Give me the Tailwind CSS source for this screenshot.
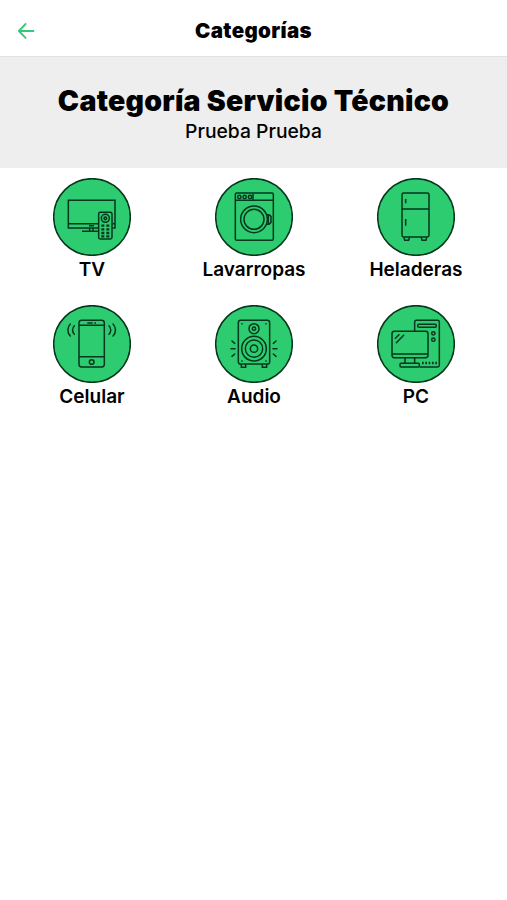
<!DOCTYPE html>
<html lang="es">
<head>
    <meta charset="UTF-8">
    <meta name="viewport" content="width=device-width, initial-scale=1.0">
    <title>Categorías</title>
    <script src="https://cdn.jsdelivr.net/npm/@tailwindcss/browser@4"></script>
</head>
<body class="bg-white text-black font-['Inter',sans-serif]">
    <header class="grid grid-cols-[60px_1fr_60px] items-center h-[57px] pt-[5px] border-b border-[#e2e2e2]">
        <a href="#" aria-label="Volver" class="pl-[17px]">
            <svg class="w-[18px] h-[18px]" viewBox="0 0 18 18" fill="none" stroke="#36c878" stroke-width="1.8" stroke-linecap="round" stroke-linejoin="round">
                <path d="M16.5 9H1.8M8.6 2L1.8 9l6.8 6.8" />
            </svg>
        </a>
        <h1 class="text-center text-[20.5px] leading-6 font-black tracking-[0.35px]">Categorías</h1>
    </header>

    <section class="h-[111px] pt-[26px] bg-[#eeeeee] text-center whitespace-nowrap">
        <h2 class="text-[28.5px] leading-[36px] font-black tracking-[0.25px]">Categoría Servicio Técnico</h2>
        <p class="text-[19.3px] leading-[25px] font-medium">Prueba Prueba</p>
    </section>

    <main class="grid grid-cols-[162px_162px_162px] gap-y-[22px] px-[11px] pt-[10px] text-[19px] leading-[27px] font-semibold">
        <a href="#" class="flex flex-col items-center">
            <svg class="w-[78px] h-[78px]" viewBox="18 15 234 234" fill="none" stroke="#06361c" stroke-width="4.5">
                <circle cx="135" cy="132" r="115" fill="#2ecc71" />
                <path d="M154 165H64V82h140v83h-7M64 152h90M197 152h7M105 175h49M126 158h15M128 165v10M138 165v10" />
                <rect x="155" y="118" width="40" height="80" rx="5" fill="#2ecc71" />
                <circle cx="175" cy="136" r="12" />
                <circle cx="175" cy="136" r="4" />
                <path d="M163 158h9M178 158h9M163 169h9M178 169h9M163 180h9M178 180h9M163 190h9M178 190h9" stroke-width="7" />
            </svg>
            <span>TV</span>
        </a>
        <a href="#" class="flex flex-col items-center">
            <svg class="w-[78px] h-[78px]" viewBox="18 15 234 234" fill="none" stroke="#06361c" stroke-width="4.5">
                <circle cx="135" cy="132" r="115" fill="#2ecc71" />
                <rect x="79" y="60" width="114" height="142" rx="4" />
                <path d="M79 82h114M132 62v20" />
                <circle cx="91" cy="72" r="5" />
                <circle cx="107" cy="72" r="5" />
                <circle cx="123" cy="72" r="5" />
                <circle cx="135" cy="139" r="40" />
                <circle cx="135" cy="139" r="30" />
                <path d="M172 125h8l6 5v18l-6 6h-8M178 127v25" />
            </svg>
            <span>Lavarropas</span>
        </a>
        <a href="#" class="flex flex-col items-center">
            <svg class="w-[78px] h-[78px]" viewBox="18 15 234 234" fill="none" stroke="#06361c" stroke-width="4.5">
                <circle cx="135" cy="132" r="115" fill="#2ecc71" />
                <rect x="93" y="60" width="81" height="132" rx="5" />
                <path d="M93 108h81M104 78v13M104 138v20M99 193l2 9h12l2-9M151 193l2 9h12l2-9" />
            </svg>
            <span>Heladeras</span>
        </a>
        <a href="#" class="flex flex-col items-center">
            <svg class="w-[78px] h-[78px]" viewBox="18 15 234 234" fill="none" stroke="#06361c" stroke-width="4.5">
                <circle cx="135" cy="132" r="115" fill="#2ecc71" />
                <rect x="96" y="61" width="76" height="140" rx="8" />
                <path d="M96 76h76M96 170h76M121 69h16M142 69h5" />
                <circle cx="134" cy="186" r="7" />
                <path d="M82 77c-7 7-7 19 0 26M70 72c-10 10-10 26 0 36M186 77c7 7 7 19 0 26M198 72c10 10 10 26 0 36" stroke-linecap="round" />
            </svg>
            <span>Celular</span>
        </a>
        <a href="#" class="flex flex-col items-center">
            <svg class="w-[78px] h-[78px]" viewBox="18 15 234 234" fill="none" stroke="#06361c" stroke-width="4.5">
                <circle cx="135" cy="132" r="115" fill="#2ecc71" />
                <rect x="88" y="61" width="94" height="131" rx="7" />
                <circle cx="135" cy="86" r="15" />
                <circle cx="135" cy="86" r="5" />
                <circle cx="135" cy="146" r="37" />
                <circle cx="135" cy="146" r="26" />
                <circle cx="135" cy="146" r="11" />
                <path d="M97 193v9h13v-9M160 193v9h13v-9M97 71h4M169 71h4M97 183h4M169 183h4" />
                <path d="M69 123l8 7M66 146h12M69 169l8-7M201 123l-8 7M204 146h-12M201 169l-8-7" stroke-linecap="round" />
            </svg>
            <span>Audio</span>
        </a>
        <a href="#" class="flex flex-col items-center">
            <svg class="w-[78px] h-[78px]" viewBox="18 15 234 234" fill="none" stroke="#06361c" stroke-width="4.5">
                <circle cx="135" cy="132" r="115" fill="#2ecc71" />
                <path d="M131 94V66q0-5 5-5h64q5 0 5 5v130q0 5-5 5h-54" />
                <rect x="140" y="73" width="56" height="9" rx="4" />
                <circle cx="187" cy="100" r="5" />
                <circle cx="187" cy="119" r="5" />
                <rect x="63" y="94" width="108" height="79" rx="7" />
                <path d="M63 162h108M102 174v16M131 174v16" />
                <rect x="87" y="190" width="58" height="11" rx="3" />
                <path d="M73 115l11-11M76 128l22-22" stroke-linecap="round" />
                <path d="M153 189h46" stroke-width="8" stroke-dasharray="5 5" />
            </svg>
            <span>PC</span>
        </a>
    </main>
</body>
</html>
